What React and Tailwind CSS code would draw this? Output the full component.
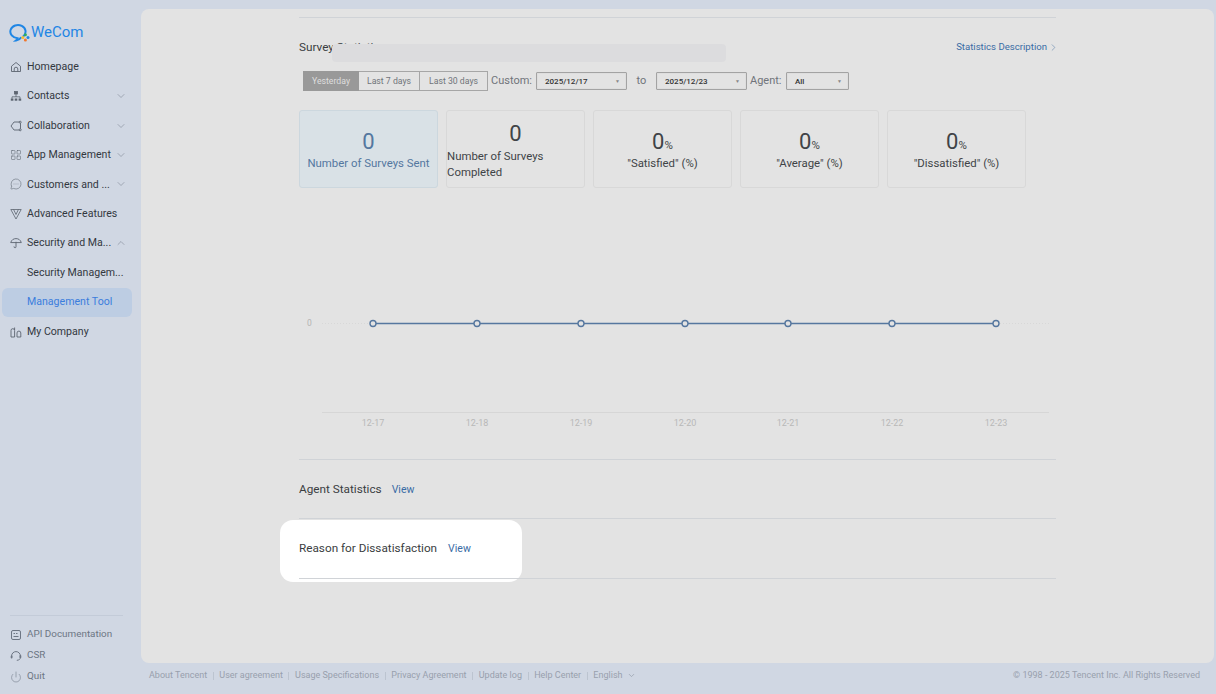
import React from 'react';
import { ChevronDown, ChevronUp, ChevronRight, LayoutGrid, MessageCircleMore, Power } from 'lucide-react';

const font = 'font-["Roboto","Liberation_Sans",sans-serif]';

const Logo = () => (
  <svg width="22" height="20" viewBox="0 0 22 20" fill="none">
    <path d="M14.4 13.2 A7.6 6.6 0 1 0 8.6 15.2 C8.6 16 8 16.8 7.2 17.4 C9.6 17.2 11 16.2 11.8 14.8" stroke="#1f86e5" strokeWidth="2" strokeLinecap="round" />
    <circle cx="16.4" cy="11.8" r="1.5" fill="#2fae5e" />
    <circle cx="19" cy="14.4" r="1.5" fill="#1f86e5" />
    <circle cx="16.4" cy="17" r="1.5" fill="#f0772b" />
    <circle cx="13.8" cy="14.4" r="1.5" fill="#f5c02e" />
  </svg>
);

const HomeIcon = () => (
  <svg width="12" height="12" viewBox="0 0 12 12" fill="none" stroke="currentColor" strokeWidth="0.9" strokeLinejoin="round">
    <path d="M1.5 5.2 6 1.5l4.5 3.7V10.5h-9z" />
    <path d="M4.2 10.5V8a1.8 1.8 0 0 1 3.6 0v2.5" />
  </svg>
);

const ContactsIcon = () => (
  <svg width="12" height="12" viewBox="0 0 12 12" fill="none" stroke="currentColor" strokeWidth="0.8">
    <rect x="4.5" y="1.5" width="3" height="2.5" fill="currentColor" />
    <path d="M6 4v3M2 8.5V6.8h8v1.7" />
    <rect x="0.8" y="8.5" width="2.6" height="2.2" fill="currentColor" stroke="none" />
    <rect x="4.7" y="8.5" width="2.6" height="2.2" fill="currentColor" stroke="none" />
    <rect x="8.6" y="8.5" width="2.6" height="2.2" fill="currentColor" stroke="none" />
  </svg>
);

const CollabIcon = () => (
  <svg width="12" height="12" viewBox="0 0 12 12" fill="none" stroke="currentColor" strokeWidth="0.9">
    <path d="M4 2h5.5a1 1 0 0 1 1 1v6a1 1 0 0 1-1 1H4L1 6z" strokeLinejoin="round" />
    <circle cx="10.2" cy="2.2" r="1" fill="#d0d7e3" />
    <circle cx="10.2" cy="9.8" r="1" fill="#d0d7e3" />
  </svg>
);

const FeatureIcon = () => (
  <svg width="12" height="12" viewBox="0 0 12 12" fill="none" stroke="currentColor" strokeWidth="0.8" strokeLinejoin="round">
    <path d="M0.8 1.5h10.4L6 11z" />
    <path d="M3.6 1.5 6 6.5l2.4-5" />
  </svg>
);

const UmbrellaIcon = () => (
  <svg width="12" height="12" viewBox="0 0 12 12" fill="none" stroke="currentColor" strokeWidth="0.9" strokeLinecap="round" strokeLinejoin="round">
    <path d="M0.8 5.2C1.6 2.8 3.6 1.6 6 1.6s4.4 1.2 5.2 3.6z" />
    <path d="M6 5.2v4.6a1 1 0 0 1-2 0" />
  </svg>
);

const CompanyIcon = () => (
  <svg width="12" height="12" viewBox="0 0 12 12" fill="none" stroke="currentColor" strokeWidth="0.9" strokeLinejoin="round">
    <path d="M1 11V4.5A1.8 1.8 0 0 1 4.6 4.5V11z" />
    <path d="M4.6 4V1.5" />
    <path d="M7 11V7a1.9 1.9 0 0 1 3.8 0v4z" />
  </svg>
);

const ApiIcon = () => (
  <svg width="12" height="12" viewBox="0 0 12 12" fill="none" stroke="currentColor" strokeWidth="1">
    <rect x="1.5" y="1.5" width="9" height="9" rx="1.5" />
    <path d="M3.5 4.5h1.5M6 4.5h1.5M3.5 7.5h5" />
  </svg>
);

const HeadsetIcon = () => (
  <svg width="12" height="12" viewBox="0 0 12 12" fill="none" stroke="currentColor" strokeWidth="1" strokeLinecap="round">
    <path d="M1.6 6.5V6a4.4 4.4 0 0 1 8.8 0v1.5c0 1.6-1.2 2.6-3.2 2.8" />
    <path d="M1.6 6.5v1" strokeWidth="1.8" />
    <path d="M10.4 6v1.2" strokeWidth="1.8" />
  </svg>
);

const navItems = [
  { label: 'Homepage', icon: <HomeIcon /> },
  { label: 'Contacts', icon: <ContactsIcon />, arrow: 'down' },
  { label: 'Collaboration', icon: <CollabIcon />, arrow: 'down' },
  { label: 'App Management', icon: <LayoutGrid size={12} strokeWidth={1.1} />, arrow: 'down' },
  { label: 'Customers and ...', icon: <MessageCircleMore size={12} strokeWidth={1.1} />, arrow: 'down' },
  { label: 'Advanced Features', icon: <FeatureIcon /> },
  { label: 'Security and Ma...', icon: <UmbrellaIcon />, arrow: 'up' },
  { label: 'Security Managem...' },
  { label: 'Management Tool', active: true },
  { label: 'My Company', icon: <CompanyIcon /> },
];

const bottomItems = [
  { label: 'API Documentation', icon: <ApiIcon /> },
  { label: 'CSR', icon: <HeadsetIcon /> },
  { label: 'Quit', icon: <Power size={12} strokeWidth={1.1} /> },
];

const footerLinks = ['About Tencent', 'User agreement', 'Usage Specifications', 'Privacy Agreement', 'Update log', 'Help Center'];

const cards = [
  { value: '0', label: 'Number of Surveys Sent', active: true },
  { value: '0', label: 'Number of Surveys Completed', left: true },
  { value: '0', unit: '%', label: '"Satisfied" (%)' },
  { value: '0', unit: '%', label: '"Average" (%)' },
  { value: '0', unit: '%', label: '"Dissatisfied" (%)' },
];

const chartX = [74, 178, 282, 386, 489, 593, 697];
const chartDays = ['12-17', '12-18', '12-19', '12-20', '12-21', '12-22', '12-23'];

const Sidebar = () => (
  <aside className="w-[141px] shrink-0 flex flex-col h-full">
    <div className="flex items-center h-[52px] pl-[9px] pt-[13px]">
      <Logo />
      <span className="text-[15px] text-[#1f86e5] leading-none">WeCom</span>
    </div>
    <nav className="flex flex-col">
      {navItems.map(item => (
        <div
          key={item.label}
          className={`h-[29.45px] mx-[2px] w-[130px] rounded-md flex items-center pr-[5px] text-[10.6px] ${item.icon ? 'pl-[8px]' : 'pl-[25px]'} ${item.active ? 'bg-[#bdcde3] text-[#3b7ddd]' : 'text-[#33383f]'}`}
        >
          {item.icon && <span className="w-[17px] flex shrink-0 text-[#5c6470]">{item.icon}</span>}
          <span className="whitespace-nowrap">{item.label}</span>
          {item.arrow === 'down' && <ChevronDown size={12} strokeWidth={1} className="ml-auto text-[#6f7784]" />}
          {item.arrow === 'up' && <ChevronUp size={12} strokeWidth={1} className="ml-auto text-[#6f7784]" />}
        </div>
      ))}
    </nav>
    <div className="mt-auto mx-[10px] w-[113px] border-t border-[#c3cbd8] pt-[8px] pb-[7px]">
      {bottomItems.map(item => (
        <div key={item.label} className="h-[21px] flex items-center text-[9.9px] text-[#6d7684]">
          <span className="w-[17px] flex shrink-0">{item.icon}</span>
          {item.label}
        </div>
      ))}
    </div>
  </aside>
);

const DateBox = ({ value, className }) => (
  <div className={`h-[18px] pt-[1px] border border-[#a3a3a3] rounded-[1px] shadow-[inset_0_0_1px_#bbb] flex items-center justify-between pl-[8px] pr-[6px] text-[8px] font-medium text-[#333] ${className}`}>
    {value}
    <span className="text-[5px] text-[#888]">▼</span>
  </div>
);

const Toolbar = () => (
  <div className="flex items-center h-[20px] ml-[4px] text-[11px] text-[#70747a]">
    <div className="flex h-[20px] text-[8.7px] border border-[#a6a6a6]">
      <span className="w-[56px] -my-[1px] -ml-[1px] pt-[1px] bg-[#999999] text-[#dedede] flex items-center justify-center">Yesterday</span>
      <span className="w-[61px] pt-[1px] flex items-center justify-center border-r border-[#a6a6a6]">Last 7 days</span>
      <span className="w-[67px] pt-[1px] flex items-center justify-center">Last 30 days</span>
    </div>
    <span className="ml-[3px] w-[40px] pt-[1px]">Custom:</span>
    <DateBox value="2025/12/17" className="ml-[5px] w-[91px]" />
    <span className="w-[29px] pt-[1px] text-center">to</span>
    <DateBox value="2025/12/23" className="w-[91px]" />
    <span className="ml-[3px] w-[33px] pt-[1px]">Agent:</span>
    <DateBox value="All" className="ml-[3px] w-[63px]" />
  </div>
);

const StatCard = ({ card }) => (
  <div className={`w-[139px] h-[78px] rounded-[3px] border flex flex-col ${card.active ? 'bg-[#d9e1e6] border-[#ccd7de] text-[#54779f]' : 'border-[#d8d8d8] text-[#3f4347]'} ${card.left ? 'items-start justify-center pt-[2px]' : 'items-center justify-center pt-[1px]'}`}>
    <div className={`text-[22px] ${card.left ? 'self-center leading-[28px]' : 'leading-[27px]'}`}>
      {card.value}
      {card.unit && <span className="text-[11.5px] leading-none">{card.unit}</span>}
    </div>
    <div className={`text-[11.4px] leading-[16px] ${card.left ? '' : 'text-center'}`}>{card.label}</div>
  </div>
);

const Chart = () => (
  <svg width="757" height="271" viewBox="0 0 757 271" className="block">
    <text x="8" y="138" fontSize="8.5" fill="#b4b4b4">0</text>
    <line x1="23" y1="135.5" x2="750" y2="135.5" stroke="#d8d8d8" strokeDasharray="1 2" />
    <line x1="23" y1="224.5" x2="750" y2="224.5" stroke="#d6d6d6" />
    <line x1="74" y1="135.5" x2="697" y2="135.5" stroke="#56779f" strokeWidth="1.5" />
    {chartX.map((x, i) => (
      <g key={x}>
        <circle cx={x} cy="135.5" r="3" fill="#e3e3e3" stroke="#56779f" strokeWidth="1.4" />
        <text x={x} y="238" fontSize="9" fill="#b8b8b8" textAnchor="middle">{chartDays[i]}</text>
      </g>
    ))}
  </svg>
);

const LinkRow = ({ title, gap, height, titleClass }) => (
  <div className={`flex items-center border-t border-[#d0d3d7] ${height}`}>
    <span className={`text-[11.75px] text-[#3a3d41] ${titleClass}`}>{title}</span>
    <span className={`text-[10.5px] pt-[1px] text-[#3a6ca5] ${gap}`}>View</span>
  </div>
);

export default function App() {
  return (
    <div className={`w-[1216px] h-[694px] bg-[#d0d7e3] flex overflow-hidden ${font}`}>
      <Sidebar />
      <div className="flex-1 flex flex-col pr-[2px]">
        <main className="mt-[9px] h-[654px] shrink-0 bg-[#e3e3e3] rounded-lg pt-[8px] pl-[158px]">
          <div className="w-[757px] relative">
            <div className="border-t border-[#d0d3d7] h-[54px] flex items-center justify-between pt-[6px] text-[11.75px] text-[#3a3d41]">
              <span>Survey Statistics</span>
              <span className="flex items-center text-[9.6px] text-[#3a6ca5]">
                Statistics Description
                <ChevronRight size={11} strokeWidth={1.3} className="ml-[1px] -mr-[3px] text-[#5f82aa]" />
              </span>
            </div>
            {/* redaction strip over the title */}
            <div className="absolute left-[33px] top-[27px] w-[394px] h-[18px] bg-[#dcdcde] rounded" />
            <Toolbar />
            <div className="flex gap-[8px] mt-[19px]">
              {cards.map(card => <StatCard key={card.label} card={card} />)}
            </div>
            <Chart />
            <LinkRow title="Agent Statistics" gap="ml-[10px]" height="h-[59px]" titleClass="pt-[1px]" />
            <div className="relative">
              {/* white highlight behind the last row */}
              <div className="absolute -left-[19px] top-[2px] w-[242px] h-[62px] bg-white rounded-[13px]" />
              <div className="relative"><LinkRow title="Reason for Dissatisfaction" gap="ml-[11px]" height="h-[60px]" /></div>
            </div>
            <div className="border-t border-[#d0d3d7] relative" />
          </div>
        </main>
        <footer className="flex-1 flex items-center justify-between pl-[8px] pr-[14px] pb-[6px] text-[9px] text-[#98a0ad]">
          <div className="flex items-center">
            {footerLinks.map(link => (
              <React.Fragment key={link}>
                <span>{link}</span>
                <span className="mx-[5.6px] h-[8px] border-l border-[#bcc4d0]" />
              </React.Fragment>
            ))}
            <span>English</span>
            <ChevronDown size={9} className="ml-[5px]" />
          </div>
          <span>© 1998 - 2025 Tencent Inc. All Rights Reserved</span>
        </footer>
      </div>
    </div>
  );
}
